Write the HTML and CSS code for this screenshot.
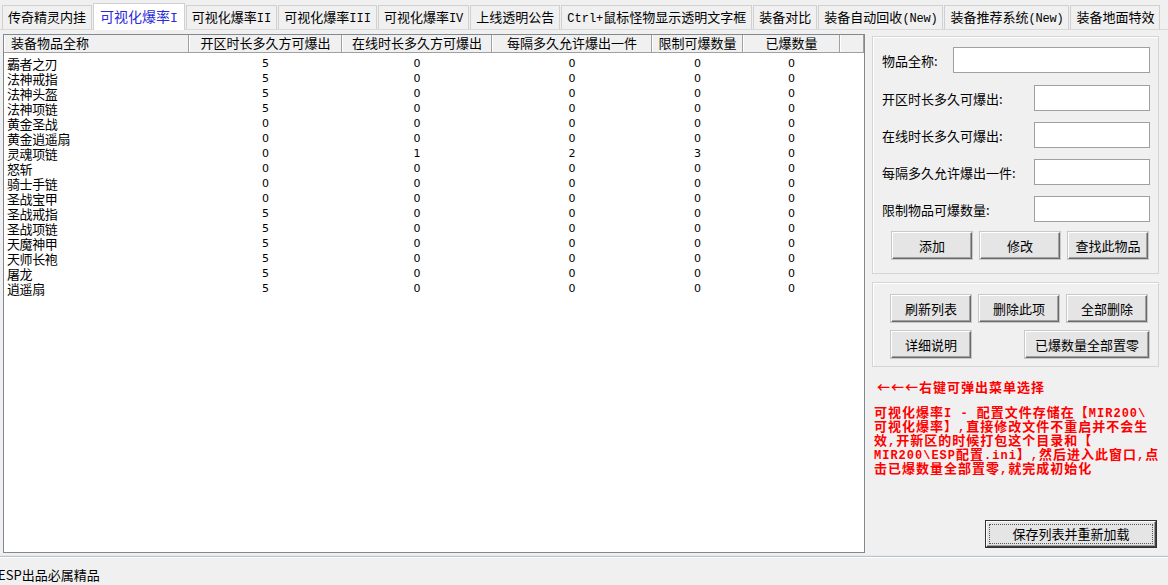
FILE: index.html
```html
<!DOCTYPE html>
<html>
<head>
    <meta charset="utf-8">
    <title>可视化爆率</title>
    <link rel="stylesheet" href="styles.css">
</head>
<body>
    <div class="tabs">
        <div class="tab">传奇精灵内挂</div>
        <div class="tab active">可视化爆率<span class="en">I</span></div>
        <div class="tab">可视化爆率<span class="en">II</span></div>
        <div class="tab">可视化爆率<span class="en">III</span></div>
        <div class="tab">可视化爆率<span class="en">IV</span></div>
        <div class="tab">上线透明公告</div>
        <div class="tab"><span class="en">Ctrl+</span>鼠标怪物显示透明文字框</div>
        <div class="tab">装备对比</div>
        <div class="tab">装备自动回收<span class="en small">(New)</span></div>
        <div class="tab">装备推荐系统<span class="en small">(New)</span></div>
        <div class="tab">装备地面特效</div>
    </div>

    <div class="page">
        <div class="list">
            <div class="head">
                <div class="hc first">装备物品全称</div>
                <div class="hc">开区时长多久方可爆出</div>
                <div class="hc">在线时长多久方可爆出</div>
                <div class="hc">每隔多久允许爆出一件</div>
                <div class="hc">限制可爆数量</div>
                <div class="hc">已爆数量</div>
                <div class="hc last"></div>
            </div>
            <div class="rows">
                <div class="row"><span class="name">霸者之刃</span><span>5</span><span>0</span><span>0</span><span>0</span><span>0</span></div>
                <div class="row"><span class="name">法神戒指</span><span>5</span><span>0</span><span>0</span><span>0</span><span>0</span></div>
                <div class="row"><span class="name">法神头盔</span><span>5</span><span>0</span><span>0</span><span>0</span><span>0</span></div>
                <div class="row"><span class="name">法神项链</span><span>5</span><span>0</span><span>0</span><span>0</span><span>0</span></div>
                <div class="row"><span class="name">黄金圣战</span><span>0</span><span>0</span><span>0</span><span>0</span><span>0</span></div>
                <div class="row"><span class="name">黄金逍遥扇</span><span>0</span><span>0</span><span>0</span><span>0</span><span>0</span></div>
                <div class="row"><span class="name">灵魂项链</span><span>0</span><span>1</span><span>2</span><span>3</span><span>0</span></div>
                <div class="row"><span class="name">怒斩</span><span>0</span><span>0</span><span>0</span><span>0</span><span>0</span></div>
                <div class="row"><span class="name">骑士手链</span><span>0</span><span>0</span><span>0</span><span>0</span><span>0</span></div>
                <div class="row"><span class="name">圣战宝甲</span><span>0</span><span>0</span><span>0</span><span>0</span><span>0</span></div>
                <div class="row"><span class="name">圣战戒指</span><span>5</span><span>0</span><span>0</span><span>0</span><span>0</span></div>
                <div class="row"><span class="name">圣战项链</span><span>5</span><span>0</span><span>0</span><span>0</span><span>0</span></div>
                <div class="row"><span class="name">天魔神甲</span><span>5</span><span>0</span><span>0</span><span>0</span><span>0</span></div>
                <div class="row"><span class="name">天师长袍</span><span>5</span><span>0</span><span>0</span><span>0</span><span>0</span></div>
                <div class="row"><span class="name">屠龙</span><span>5</span><span>0</span><span>0</span><span>0</span><span>0</span></div>
                <div class="row"><span class="name">逍遥扇</span><span>5</span><span>0</span><span>0</span><span>0</span><span>0</span></div>
            </div>
        </div>

        <div class="side">
            <div class="group g1">
                <div class="field wide">
                    <label>物品全称:</label>
                    <input type="text" class="box long">
                </div>
                <div class="field">
                    <label>开区时长多久可爆出:</label>
                    <input type="text" class="box">
                </div>
                <div class="field">
                    <label>在线时长多久可爆出:</label>
                    <input type="text" class="box">
                </div>
                <div class="field">
                    <label>每隔多久允许爆出一件:</label>
                    <input type="text" class="box">
                </div>
                <div class="field">
                    <label>限制物品可爆数量:</label>
                    <input type="text" class="box">
                </div>
                <div class="btnrow">
                    <button class="btn">添加</button>
                    <button class="btn">修改</button>
                    <button class="btn">查找此物品</button>
                </div>
            </div>

            <div class="group g2">
                <div class="btnrow">
                    <button class="btn">刷新列表</button>
                    <button class="btn">删除此项</button>
                    <button class="btn">全部删除</button>
                </div>
                <div class="btnrow split">
                    <button class="btn">详细说明</button>
                    <button class="btn big">已爆数量全部置零</button>
                </div>
            </div>

            <div class="hint">←←←右键可弹出菜单选择</div>

            <div class="note">
                可视化爆率<span class="en">I - </span>配置文件存储在【<span class="en">MIR200\</span><br>
                可视化爆率】<span class="en">,</span>直接修改文件不重启并不会生<br>
                效<span class="en">,</span>开新区的时候打包这个目录和【<br>
                <span class="en">MIR200\ESP</span>配置<span class="en">.ini</span>】<span class="en">,</span>然后进入此窗口<span class="en">,</span>点<br>
                击已爆数量全部置零<span class="en">,</span>就完成初始化
            </div>

            <div class="savebar">
                <button class="btn save"><span>保存列表并重新加载</span></button>
            </div>
        </div>
    </div>

    <div class="status">ESP出品必属精品</div>
</body>
</html>
```

FILE: styles.css
```css
body {
    margin: 0;
    background-color: #f0f0f0;
    font-family: "Noto Sans CJK SC", "Liberation Sans", sans-serif;
    font-size: 13px;
    color: #000;
    width: 1168px;
    height: 585px;
    overflow: hidden;
}

/* tab strip */
.tabs {
    display: flex;
    align-items: flex-end;
    height: 30px;
    padding-left: 2px;
    box-sizing: border-box;
    border-bottom: 1px solid #d9d9d9;
}

.tab {
    height: 24px;
    line-height: 22px;
    padding: 0 5px;
    margin-right: 1px;
    border: 1px solid #d0d0d0;
    border-bottom: 0;
    box-sizing: border-box;
    background-color: #f0f0f0;
    white-space: nowrap;
}

.tab .en {
    font-family: "Liberation Mono", monospace;
    font-size: 12px;
}

.tab .en.small {
    letter-spacing: -0.2px;
}

.tab.active {
    height: 27px;
    line-height: 24px;
    background-color: #fff;
    color: #2b2bd8;
    font-size: 14px;
    margin-bottom: -1px;
    padding: 0 6px;
}

.tab.active .en {
    font-size: 13px;
}

/* page */
.page {
    display: flex;
    height: 525px;
}

.list {
    margin: 4px 0 0 3px;
    width: 862px;
    height: 519px;
    box-sizing: border-box;
    border: 1px solid #828790;
    background-color: #fff;
}

.head {
    display: flex;
    height: 18px;
    background-color: #f0f0f0;
    border-bottom: 1px solid #a0a0a0;
    box-sizing: border-box;
}

.hc {
    line-height: 16px;
    text-align: center;
    border-right: 1px solid #a0a0a0;
    border-left: 1px solid #fff;
    box-sizing: border-box;
    white-space: nowrap;
}

.hc:nth-child(1) { width: 185px; text-align: left; padding-left: 6px; }
.hc:nth-child(2) { width: 153px; }
.hc:nth-child(3) { width: 150px; }
.hc:nth-child(4) { width: 160px; }
.hc:nth-child(5) { width: 91px; }
.hc:nth-child(6) { width: 97px; }
.hc:nth-child(7) { width: 24px; }

.rows {
    padding-top: 3px;
}

.row {
    display: grid;
    grid-template-columns: 185px 153px 150px 160px 91px 97px;
    height: 15px;
    line-height: 15px;
}

.row span {
    text-align: center;
    font-family: "DejaVu Sans", "Liberation Sans", sans-serif;
    font-size: 11px;
}

.row .name {
    text-align: left;
    padding-left: 3px;
    font-family: "Noto Sans CJK SC", sans-serif;
    font-size: 13px;
    letter-spacing: -0.4px;
}

/* right side */
.side {
    margin-left: 7px;
    width: 287px;
    display: flex;
    flex-direction: column;
}

.group {
    border: 1px solid #d5d5d5;
    box-shadow: inset 1px 1px 0 #fff;
}

.g1 {
    margin-top: 6px;
    height: 238px;
    box-sizing: border-box;
    padding: 10px 8px 0 9px;
}

.field {
    display: flex;
    align-items: center;
    justify-content: space-between;
    height: 26px;
    margin-bottom: 11px;
}

.field.wide {
    margin-bottom: 12px;
}

.box {
    width: 116px;
    height: 26px;
    box-sizing: border-box;
    border: 1px solid #a0a0a0;
    background-color: #fff;
}

.box.long {
    width: 197px;
}

.btnrow {
    display: flex;
    gap: 8px;
    padding-left: 10px;
}

.g1 .btnrow {
    margin-top: -1px;
}

.btn {
    width: 80px;
    height: 27px;
    padding: 0;
    font-family: "Noto Sans CJK SC", sans-serif;
    font-size: 13px;
    color: #000;
    background-color: #e5e5e5;
    border: 1px solid;
    border-color: #fff #6a6a6a #6a6a6a #fff;
    box-shadow: inset -1px -1px 0 #a0a0a0, 0 0 0 1px #c8c8c8;
}

.g2 {
    margin-top: 8px;
    height: 85px;
    box-sizing: border-box;
    padding-top: 12px;
}

.g2 .btnrow {
    padding-left: 18px;
    margin-bottom: 9px;
}

.btnrow.split {
    justify-content: space-between;
    padding-right: 9px;
}

.btn.big {
    width: 124px;
}

.hint {
    margin-top: 12px;
    padding-left: 5px;
    color: #ff0000;
    font-weight: bold;
    font-size: 13px;
    line-height: 16px;
    letter-spacing: 1px;
}

.note {
    margin-top: 10px;
    padding-left: 2px;
    color: #ff0000;
    font-weight: bold;
    font-size: 13px;
    line-height: 14px;
    white-space: nowrap;
    letter-spacing: 1px;
}

.note .en {
    font-family: "Liberation Mono", monospace;
    font-size: 12px;
    line-height: 0;
}

.savebar {
    margin-top: 46px;
    display: flex;
    justify-content: flex-end;
}

.btn.save {
    width: 170px;
    height: 26px;
    margin-right: 3px;
    border-color: #fff #404040 #404040 #fff;
    box-shadow: inset -1px -1px 0 #a0a0a0, 0 0 0 1px #303030;
    padding: 2px;
}

.btn.save span {
    display: block;
    height: 100%;
    line-height: 18px;
    border: 1px dotted #555;
    box-sizing: border-box;
}

/* status bar */
.status {
    border-top: 1px solid #b9c3cc;
    box-shadow: inset 0 1px 0 #fff, 0 -1px 0 #e8e8e8;
    height: 29px;
    margin-top: 1px;
    padding-top: 9px;
    box-sizing: border-box;
    margin-left: -2px;
    line-height: 18px;
}
```
